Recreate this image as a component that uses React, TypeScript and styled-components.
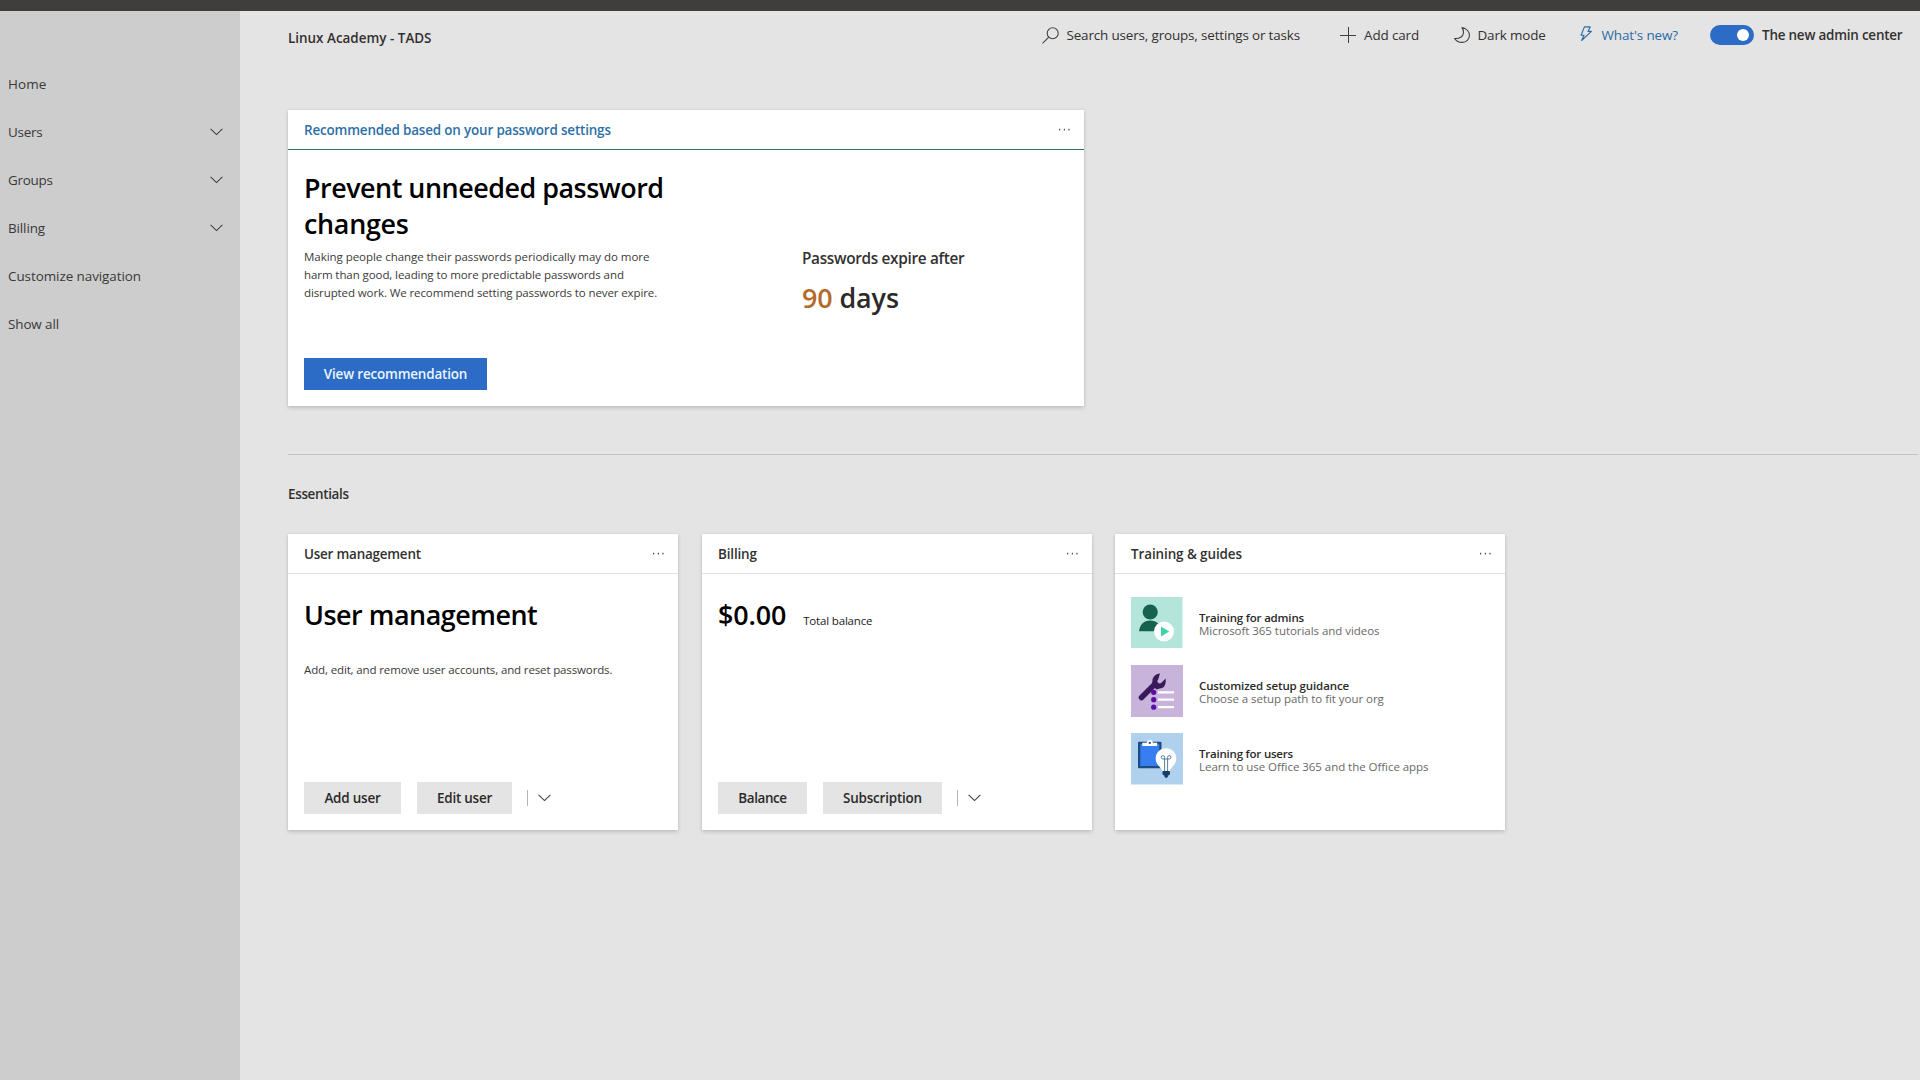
import React from "react";
import styled, { createGlobalStyle } from "styled-components";

const GlobalStyle = createGlobalStyle`
  * { box-sizing: border-box; }
  html, body { margin: 0; padding: 0; }
  body {
    font-family: "Open Sans", "Noto Sans", sans-serif;
    font-size: 13.44px;
    color: #323130;
    background: #e4e4e4;
    overflow: hidden;
  }
  svg { display: block; flex: none; }
`;

const Page = styled.div`
  display: flex;
  flex-direction: column;
  width: 1920px;
  height: 1080px;
`;

const TopBar = styled.div`
  height: 11px;
  flex: none;
  background: #403e3c;
`;

const Body = styled.div`
  display: flex;
  flex: 1;
  min-height: 0;
`;

const Sidebar = styled.nav`
  width: 240px;
  flex: none;
  padding-top: 49px;
  background: #cdcdcd;
`;

const NavItem = styled.a<{ $ls: number }>`
  display: flex;
  align-items: center;
  justify-content: space-between;
  height: 48px;
  padding: 0 17.5px 0 8px;
  letter-spacing: ${(p) => p.$ls}px;
  color: #3a3938;
`;

const Main = styled.main`
  flex: 1;
  min-width: 0;
  padding-left: 48px;
`;

const Header = styled.header`
  display: flex;
  justify-content: space-between;
  height: 48px;
  padding-right: 16px;
`;

const OrgName = styled.div`
  font-weight: 600;
  line-height: 20px;
  margin-top: 17px;
`;

const Toolbar = styled.div`
  display: flex;
  height: 48px;
  align-items: center;
`;

const ToolItem = styled.div<{ $width: number; $gap: number; $ls: number; $link?: boolean }>`
  display: flex;
  align-items: center;
  width: ${(p) => p.$width}px;
  gap: ${(p) => p.$gap}px;
  letter-spacing: ${(p) => p.$ls}px;
  line-height: 20px;
  white-space: nowrap;
  color: ${(p) => (p.$link ? "#2b6ba6" : "#323130")};
`;

const Toggle = styled.div`
  display: flex;
  align-items: center;
  justify-content: flex-end;
  width: 44px;
  height: 20px;
  padding-right: 5px;
  border-radius: 10px;
  background: #2c6bc6;
`;

const Knob = styled.span`
  width: 12px;
  height: 12px;
  border-radius: 50%;
  background: #fff;
`;

const ToggleLabel = styled.span`
  width: 142px;
  margin-left: 8px;
  padding-bottom: 1px;
  font-weight: 600;
  letter-spacing: -0.21px;
  line-height: 20px;
  white-space: nowrap;
`;

const Card = styled.section<{ $width: number }>`
  display: flex;
  flex-direction: column;
  width: ${(p) => p.$width}px;
  height: 296px;
  flex: none;
  background: #fff;
  box-shadow: 0 1.6px 4px rgba(0, 0, 0, 0.15), 0 0 2px rgba(0, 0, 0, 0.08);
`;

const CardHeader = styled.div<{ $accent?: boolean }>`
  display: flex;
  align-items: center;
  justify-content: space-between;
  height: 40px;
  flex: none;
  padding: 0 13px 0 16px;
  border-bottom: 1px solid ${(p) => (p.$accent ? "#35706f" : "#e1e1e1")};
`;

const CardTitle = styled.h3<{ $ls: number; $accent?: boolean }>`
  margin: 0;
  padding-top: 1px;
  font-size: 13.44px;
  font-weight: 600;
  line-height: 20px;
  letter-spacing: ${(p) => p.$ls}px;
  color: ${(p) => (p.$accent ? "#2d70a8" : "#323130")};
`;

const CardBody = styled.div`
  display: flex;
  flex: 1;
  flex-direction: column;
  padding: 23px 16px 16px;
`;

const RecommendationBody = styled.div`
  display: grid;
  flex: 1;
  grid-template-columns: 498px 1fr;
  padding: 20px 16px 16px;
`;

const Column = styled.div`
  display: flex;
  flex-direction: column;
  align-items: flex-start;
`;

const Metric = styled.div`
  padding-top: 79px;
`;

const MetricLabel = styled.div`
  font-size: 15.36px;
  font-weight: 600;
  line-height: 20px;
  letter-spacing: -0.33px;
`;

const MetricValue = styled.div`
  margin-top: 11px;
  font-size: 26.9px;
  font-weight: 600;
  line-height: 36px;
  letter-spacing: -0.1px;
  color: #2b2a29;
`;

const Highlight = styled.span`
  color: #b5692b;
`;

const Heading = styled.h2<{ $ls?: number }>`
  margin: 0;
  font-size: 26.9px;
  font-weight: 560;
  line-height: 36px;
  letter-spacing: ${(p) => p.$ls ?? -0.48}px;
  color: #000;
`;

const Copy = styled.p<{ $top: number; $ls?: number }>`
  margin: ${(p) => p.$top}px 0 0;
  font-size: 11.52px;
  line-height: 18px;
  letter-spacing: ${(p) => p.$ls ?? -0.11}px;
  white-space: nowrap;
  color: #3b3a39;
`;

const Line = styled.span<{ $ls: number }>`
  display: block;
  letter-spacing: ${(p) => p.$ls}px;
`;

const Button = styled.button<{ $width: number; $ls: number; $primary?: boolean }>`
  width: ${(p) => p.$width}px;
  height: 32px;
  padding: 0 0 ${(p) => (p.$primary ? 0 : 1)}px;
  border: 0;
  font: 600 13.44px/30px "Open Sans", "Noto Sans", sans-serif;
  letter-spacing: ${(p) => p.$ls}px;
  color: ${(p) => (p.$primary ? "#e9f6ff" : "#2b2a29")};
  background: ${(p) => (p.$primary ? "#2c6bc6" : "#e4e4e4")};
`;

const Actions = styled.div`
  display: flex;
  align-items: center;
  margin-top: auto;
  gap: 16px;
`;

const Overflow = styled.div`
  display: flex;
  align-items: center;
  height: 16px;
  margin-left: -1px;
  padding-left: 9.5px;
  border-left: 1px solid #b4b4b4;
`;

const Divider = styled.hr`
  width: 1630px;
  height: 1px;
  margin: 48px 0 0;
  border: 0;
  background: #c3c3c3;
`;

const SectionTitle = styled.h2`
  margin: 29px 0 30px;
  font-size: 13.44px;
  font-weight: 600;
  line-height: 20px;
  letter-spacing: -0.33px;
`;

const Recommended = styled.div`
  padding-top: 51px;
`;

const CardRow = styled.div`
  display: grid;
  grid-template-columns: 414px 413px 390px;
`;

const Balance = styled.div`
  display: flex;
  align-items: baseline;
  gap: 17px;
`;

const BalanceLabel = styled.span`
  font-size: 11.52px;
  letter-spacing: -0.17px;
  color: #1b1a19;
`;

const GuideList = styled.div`
  display: flex;
  flex-direction: column;
  gap: 16px;
  padding: 23px 16px;
`;

const Guide = styled.div`
  display: flex;
  align-items: center;
  gap: 16px;
  height: 52px;
`;

const GuideText = styled.div`
  padding-top: 2px;
  font-size: 11.52px;
  line-height: 13px;
`;

const GuideTitle = styled.div<{ $ls: number }>`
  font-weight: 600;
  letter-spacing: ${(p) => p.$ls}px;
  color: #2b2a29;
`;

const GuideNote = styled.div`
  letter-spacing: -0.05px;
  color: #6a6867;
`;

const Chevron = () => (
  <svg width="13" height="8" viewBox="0 0 13 8" fill="none" stroke="#3f3e3d" strokeWidth="1.1">
    <path d="M.6 .9 6.5 6.6 12.4 .9" />
  </svg>
);

const Dots = () => (
  <svg width="13" height="3" viewBox="0 0 13 3" fill="#4a4948">
    <rect x="1" y=".8" width="1.2" height="1.6" />
    <rect x="5.8" y=".8" width="1.2" height="1.6" />
    <rect x="10.4" y=".8" width="1.2" height="1.6" />
  </svg>
);

const SearchIcon = () => (
  <svg width="17" height="17" viewBox="0 0 17 17" fill="none" stroke="#454443" strokeWidth="1.1">
    <circle cx="10.7" cy="6.2" r="5.5" />
    <path d="M6.8 10.1.5 16.4" />
  </svg>
);

const PlusIcon = () => (
  <svg width="16" height="16" viewBox="0 0 16 16" fill="none" stroke="#3f3e3d">
    <path d="M8.5 0v16M0 8.5h16" />
  </svg>
);

const MoonIcon = () => (
  <svg width="16" height="16" viewBox="0 0 16 16" fill="none" stroke="#3f3e3d" strokeWidth="1.1" strokeLinejoin="round">
    <path d="M7.9.6C12.3 1.3 15.4 4.4 15.4 8.4c0 4-3.1 7-7.1 7-3.4 0-6.2-1.4-7.7-3.9 4.9.4 8.6-2 8.9-5.8.1-1.9-.4-3.6-1.6-5.1z" />
  </svg>
);

const BoltIcon = () => (
  <svg width="12" height="18" viewBox="0 0 12 18" fill="none" stroke="#2b6ba6" strokeWidth="1.1" strokeLinejoin="round">
    <path d="M4.4 .9h5.8L8 5.4h3.400L1.600 14.500 4 9.200H1.100z" />
  </svg>
);

const AdminArt = () => (
  <svg width="52" height="52" viewBox="0 0 52 52">
    <path fill="#b3e5db" d="M0 0h51.500v51H0z" />
    <circle cx="19.2" cy="15" r="7.6" fill="#17614f" />
    <path fill="#17614f" d="M8 34.3C8.700 28 12.700 23.500 19 23.500c7 0 11 4.500 11 10.800z" />
    <circle cx="33" cy="34.500" r="10" fill="#fff" />
    <path fill="#3cd3ab" d="M30 29.500v10l8.200-5z" />
  </svg>
);

const SetupArt = () => (
  <svg width="52" height="52" viewBox="0 0 52 52">
    <path fill="#c8b3da" d="M0 0h52v52H0z" />
    <path d="M10.500 32.500 24 19" stroke="#3b1a5c" strokeWidth="5.600" strokeLinecap="round" />
    <path
      fill="#3b1a5c"
      d="M29 8.600c-4.500.2-7.800 3.700-7.600 8l-.6 3.200 4.600 4.600 3.300-.9c4.300.1 6.700-3.600 5.900-9.900l-4.200 4.200c-1.200 1-2.500 1-3.300 0-1-1-.9-2.300.1-3.400z"
    />
    <g fill="#5f0ca8">
      <circle cx="22.700" cy="27.300" r="2.600" />
      <circle cx="22.700" cy="34.700" r="2.600" />
      <circle cx="22.700" cy="42.200" r="2.600" />
    </g>
    <path d="M27 27.300h16M27 34.700h16M27 42.200h16" stroke="#fff" strokeWidth="2.300" />
  </svg>
);

const UserArt = () => (
  <svg width="52" height="52" viewBox="0 0 52 52">
    <path fill="#b0d1ed" d="M0 0h52v51.500H0z" />
    <rect x="7" y="8.700" width="23.500" height="26.500" rx="1" fill="#1c4c80" />
    <rect x="9.300" y="11" width="19" height="22" fill="#377ff0" />
    <path fill="#fff" d="M11.300 13V9.800h4.400C15.700 8.200 17 7 18.800 7s3.100 1.200 3.100 2.800h4.300V13z" />
    <circle cx="18.800" cy="9.900" r="1.100" fill="#1c4c80" />
    <path fill="#fff" d="M35 15.200c6 0 10.300 4.600 10.300 10.200 0 4.600-2.700 7-4.800 9.500-.9 1.100-1.500 2.100-1.500 3.100h-8c0-1-.6-2-1.500-3.100-2.100-2.500-4.800-4.900-4.800-9.500 0-5.600 4.300-10.200 10.300-10.200z" />
    <path d="M33.600 38V24.500a1.700 1.700 0 1 0-1.700 1.500h6.400a1.700 1.700 0 1 0-1.700-1.500V38" fill="none" stroke="#4b6f92" strokeWidth=".9" />
    <path fill="#163f68" d="M31.500 38h7.400v3.500l-2 1.200v1.400l-1.700.9-1.700-.9v-1.400l-2-1.200z" />
  </svg>
);

const nav = [
  { label: "Home", ls: 0.1 },
  { label: "Users", ls: -0.25, sub: true },
  { label: "Groups", ls: -0.25, sub: true },
  { label: "Billing", ls: -0.12, sub: true },
  { label: "Customize navigation", ls: -0.06 },
  { label: "Show all", ls: -0.11 },
];

const guides = [
  { title: "Training for admins", note: "Microsoft 365 tutorials and videos", ls: -0.2, art: <AdminArt /> },
  { title: "Customized setup guidance", note: "Choose a setup path to fit your org", ls: -0.12, art: <SetupArt /> },
  { title: "Training for users", note: "Learn to use Office 365 and the Office apps", ls: -0.22, art: <UserArt /> },
];

export default function App() {
  return (
    <Page>
      <GlobalStyle />
      <TopBar />
      <Body>
        <Sidebar>
          {nav.map((n) => (
            <NavItem key={n.label} $ls={n.ls}>
              {n.label}
              {n.sub && <Chevron />}
            </NavItem>
          ))}
        </Sidebar>
        <Main>
          <Header>
            <OrgName>Linux Academy - TADS</OrgName>
            <Toolbar>
              <ToolItem $width={298} $gap={7.5} $ls={-0.15}>
                <SearchIcon />
                Search users, groups, settings or tasks
              </ToolItem>
              <ToolItem $width={114} $gap={8} $ls={-0.12}>
                <PlusIcon />
                Add card
              </ToolItem>
              <ToolItem $width={126} $gap={7.5} $ls={-0.15}>
                <MoonIcon />
                Dark mode
              </ToolItem>
              <ToolItem $width={130} $gap={9.5} $ls={-0.12} $link>
                <BoltIcon />
                What's new?
              </ToolItem>
              <Toggle>
                <Knob />
              </Toggle>
              <ToggleLabel>The new admin center</ToggleLabel>
            </Toolbar>
          </Header>

          <Recommended>
            <Card $width={796}>
              <CardHeader $accent>
                <CardTitle $accent $ls={-0.17}>
                  Recommended based on your password settings
                </CardTitle>
                <Dots />
              </CardHeader>
              <RecommendationBody>
                <Column>
                  <Heading>
                    Prevent unneeded password
                    <br />
                    <Line as="span" $ls={-0.3}>changes</Line>
                  </Heading>
                  <Copy $top={6}>
                    <Line $ls={-0.05}>Making people change their passwords periodically may do more</Line>
                    <Line $ls={-0.09}>harm than good, leading to more predictable passwords and</Line>
                    <Line $ls={-0.11}>disrupted work. We recommend setting passwords to never expire.</Line>
                  </Copy>
                  <Actions>
                    <Button $primary $width={183} $ls={-0.17}>
                      View recommendation
                    </Button>
                  </Actions>
                </Column>
                <Metric>
                  <MetricLabel>Passwords expire after</MetricLabel>
                  <MetricValue>
                    <Highlight>90</Highlight> days
                  </MetricValue>
                </Metric>
              </RecommendationBody>
            </Card>
          </Recommended>

          <Divider />
          <SectionTitle>Essentials</SectionTitle>

          <CardRow>
            <Card $width={390}>
              <CardHeader>
                <CardTitle $ls={-0.22}>User management</CardTitle>
                <Dots />
              </CardHeader>
              <CardBody>
                <Heading>User management</Heading>
                <Copy $top={28} $ls={-0.14}>
                  Add, edit, and remove user accounts, and reset passwords.
                </Copy>
                <Actions>
                  <Button $width={97} $ls={-0.2}>Add user</Button>
                  <Button $width={95} $ls={-0.22}>Edit user</Button>
                  <Overflow>
                    <Chevron />
                  </Overflow>
                </Actions>
              </CardBody>
            </Card>

            <Card $width={390}>
              <CardHeader>
                <CardTitle $ls={-0.15}>Billing</CardTitle>
                <Dots />
              </CardHeader>
              <CardBody>
                <Balance>
                  <Heading $ls={-0.15}>$0.00</Heading>
                  <BalanceLabel>Total balance</BalanceLabel>
                </Balance>
                <Actions>
                  <Button $width={89} $ls={-0.4}>Balance</Button>
                  <Button $width={119} $ls={-0.2}>Subscription</Button>
                  <Overflow>
                    <Chevron />
                  </Overflow>
                </Actions>
              </CardBody>
            </Card>

            <Card $width={390}>
              <CardHeader>
                <CardTitle $ls={-0.09}>Training &amp; guides</CardTitle>
                <Dots />
              </CardHeader>
              <GuideList>
                {guides.map((g) => (
                  <Guide key={g.title}>
                    {g.art}
                    <GuideText>
                      <GuideTitle $ls={g.ls}>{g.title}</GuideTitle>
                      <GuideNote>{g.note}</GuideNote>
                    </GuideText>
                  </Guide>
                ))}
              </GuideList>
            </Card>
          </CardRow>
        </Main>
      </Body>
    </Page>
  );
}
